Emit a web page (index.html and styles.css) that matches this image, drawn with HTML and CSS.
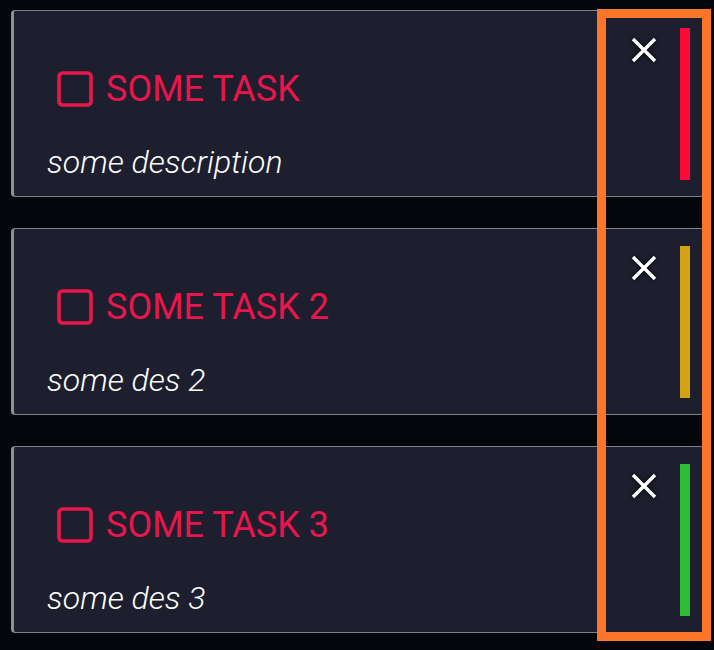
FILE: index.html
```html
<!DOCTYPE html>
<html>
<head>
<meta charset="utf-8">
<link rel="stylesheet" href="styles.css">
</head>
<body>
<div class="list">
  <div class="card">
    <div class="main">
      <div class="title-row">
        <svg class="checkbox" viewBox="0 0 36 36"><rect x="2" y="2" width="32" height="32" rx="3.5" ry="3.5"/></svg>
        <span class="title">SOME TASK</span>
      </div>
      <div class="desc">some description</div>
    </div>
    <div class="actions">
      <svg class="close" viewBox="0 0 28 28"><path d="M3 3 L25 25 M25 3 L3 25"/></svg>
      <div class="bar" style="background:#ff0a37"></div>
    </div>
  </div>
  <div class="card">
    <div class="main">
      <div class="title-row">
        <svg class="checkbox" viewBox="0 0 36 36"><rect x="2" y="2" width="32" height="32" rx="3.5" ry="3.5"/></svg>
        <span class="title">SOME TASK 2</span>
      </div>
      <div class="desc">some des 2</div>
    </div>
    <div class="actions">
      <svg class="close" viewBox="0 0 28 28"><path d="M3 3 L25 25 M25 3 L3 25"/></svg>
      <div class="bar" style="background:#d4a214"></div>
    </div>
  </div>
  <div class="card">
    <div class="main">
      <div class="title-row">
        <svg class="checkbox" viewBox="0 0 36 36"><rect x="2" y="2" width="32" height="32" rx="3.5" ry="3.5"/></svg>
        <span class="title">SOME TASK 3</span>
      </div>
      <div class="desc">some des 3</div>
    </div>
    <div class="actions">
      <svg class="close" viewBox="0 0 28 28"><path d="M3 3 L25 25 M25 3 L3 25"/></svg>
      <div class="bar" style="background:#2fbf37"></div>
    </div>
  </div>
</div>
<div class="highlight"></div>
</body>
</html>
```
FILE: styles.css
```css
html, body {
  margin: 0;
  padding: 0;
  background: #04060c;
  width: 714px;
  height: 650px;
  overflow: hidden;
  font-family: Roboto, "Noto Sans", sans-serif;
}

.list {
  display: flex;
  flex-direction: column;
  gap: 31px;
  padding: 10px 10px 0 11px;
}

.card {
  display: flex;
  background: #1d1f2f;
  border-top: 1px solid #7e818a;
  border-bottom: 1px solid #7e818a;
  border-left: 3px solid #8f9093;
  border-radius: 4px;
}

.main {
  flex: 1;
  padding: 60px 0 16px 33px;
}

.title-row {
  display: flex;
  align-items: center;
  gap: 13px;
  height: 36px;
  margin-left: 10px;
}

.checkbox {
  width: 36px;
  height: 36px;
  flex: none;
}

.checkbox rect {
  fill: none;
  stroke: #e8164b;
  stroke-width: 3.6;
}

.title {
  color: #e8164b;
  font-size: 36px;
  line-height: 36px;
  font-weight: 400;
}

.desc {
  margin-top: 37px;
  color: #ffffff;
  font-size: 32px;
  line-height: 36px;
  font-style: italic;
  font-weight: 300;
}

.actions {
  display: flex;
  align-items: flex-start;
  padding: 17px 14px 16px 0;
}

.close {
  width: 28px;
  height: 28px;
  margin-top: 8px;
  margin-right: 22px;
  filter: drop-shadow(0 0 2px #000);
}

.close path {
  stroke: #ffffff;
  stroke-width: 3.4;
  fill: none;
}

.bar {
  width: 10px;
  align-self: stretch;
}

.highlight {
  position: absolute;
  left: 597px;
  top: 9px;
  width: 96px;
  height: 614px;
  border: 9px solid #fb7628;
}
```
